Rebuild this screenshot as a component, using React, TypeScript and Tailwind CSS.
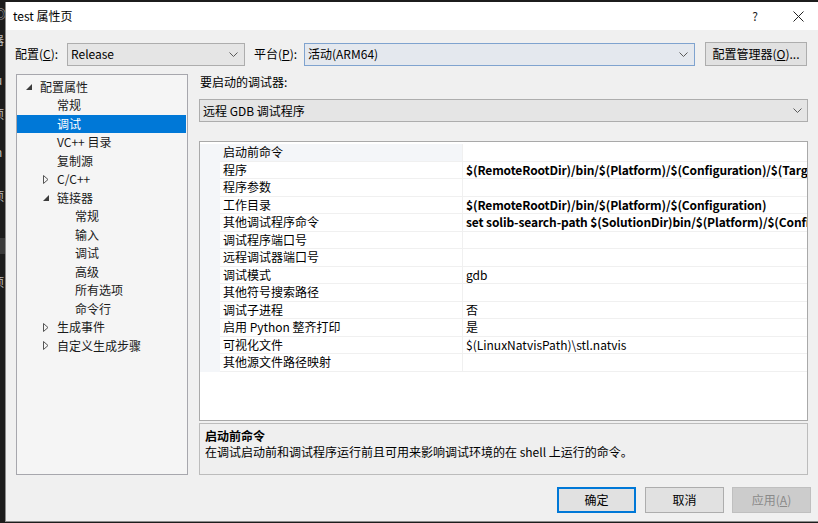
import React from "react";

type TreeItem = { label: string; level: 1 | 2 | 3; arrow?: "open" | "closed"; selected?: boolean };

const tree: TreeItem[] = [
  { label: "配置属性", level: 1, arrow: "open" },
  { label: "常规", level: 2 },
  { label: "调试", level: 2, selected: true },
  { label: "VC++ 目录", level: 2 },
  { label: "复制源", level: 2 },
  { label: "C/C++", level: 2, arrow: "closed" },
  { label: "链接器", level: 2, arrow: "open" },
  { label: "常规", level: 3 },
  { label: "输入", level: 3 },
  { label: "调试", level: 3 },
  { label: "高级", level: 3 },
  { label: "所有选项", level: 3 },
  { label: "命令行", level: 3 },
  { label: "生成事件", level: 2, arrow: "closed" },
  { label: "自定义生成步骤", level: 2, arrow: "closed" },
];

type Prop = { name: string; value: string; bold?: boolean; selected?: boolean };

const props: Prop[] = [
  { name: "启动前命令", value: "", selected: true },
  { name: "程序", value: "$(RemoteRootDir)/bin/$(Platform)/$(Configuration)/$(TargetName)$(TargetExt)", bold: true },
  { name: "程序参数", value: "" },
  { name: "工作目录", value: "$(RemoteRootDir)/bin/$(Platform)/$(Configuration)", bold: true },
  { name: "其他调试程序命令", value: "set solib-search-path $(SolutionDir)bin/$(Platform)/$(Configuration)", bold: true },
  { name: "调试程序端口号", value: "" },
  { name: "远程调试器端口号", value: "" },
  { name: "调试模式", value: "gdb" },
  { name: "其他符号搜索路径", value: "" },
  { name: "调试子进程", value: "否" },
  { name: "启用 Python 整齐打印", value: "是" },
  { name: "可视化文件", value: "$(LinuxNatvisPath)\\stl.natvis" },
  { name: "其他源文件路径映射", value: "" },
];

const Chevron = () => (
  <svg width="9" height="5" viewBox="0 0 9 5" className="shrink-0">
    <path d="M0.5 0.5 L4.5 4.5 L8.5 0.5" fill="none" stroke="#5a5a5a" strokeWidth="1" />
  </svg>
);

const ArrowOpen = () => (
  <svg width="6" height="6" viewBox="0 0 6 6">
    <path d="M6 0 L6 6 L0 6 Z" fill="#3c3c3c" />
  </svg>
);

const ArrowClosed = () => (
  <svg width="6" height="9" viewBox="0 0 6 9">
    <path d="M0.5 0.5 L5 4.5 L0.5 8.5 Z" fill="none" stroke="#555" strokeWidth="1" />
  </svg>
);

const levelPad: Record<number, string> = { 1: "pl-[9px]", 2: "pl-[26px]", 3: "pl-[44px]" };

export default function App() {
  return (
    <div className="w-[818px] h-[523px] bg-[#1c1c1c] overflow-hidden flex font-['Noto_Sans_CJK_SC','Noto_Sans',sans-serif] text-[12px] text-black">
      {/* background window strip */}
      <div className="w-[5px] h-full overflow-hidden flex flex-col text-[#bdbdbd] text-[12px] leading-[16px] shrink-0">
        <span className="mt-[6px] -ml-[6px]">◎</span>
        <span className="mt-[10px] -ml-[8px]">器</span>
        <span className="mt-[24px] -ml-[5px]">u</span>
        <span className="mt-[18px] -ml-[8px]">项</span>
        <span className="mt-[2px] -ml-[7px]">F</span>
        <span className="mt-[4px] -ml-[5px]">n</span>
        <span className="mt-[28px] -ml-[8px]">项</span>
        <div className="mt-[34px] h-[16px] bg-[#3a3a3a]" />
        <span className="mt-[20px] -ml-[8px]">项</span>
      </div>

      {/* dialog */}
      <div className="flex-1 mt-[2px] h-[520px] bg-[#f0f0f0] border-l border-b border-[#8c8c8c] flex flex-col">
        {/* title bar */}
        <div className="h-[28px] bg-white flex items-center pl-[7px] shrink-0">
          <span className="text-[12px]">test 属性页</span>
          <span className="ml-auto text-[12px] text-[#222] mr-[35px]">?</span>
          <svg width="11" height="11" viewBox="0 0 11 11" className="mr-[14px]">
            <path d="M0.5 0.5 L10.5 10.5 M10.5 0.5 L0.5 10.5" stroke="#222" strokeWidth="1" />
          </svg>
        </div>

        {/* config row */}
        <div className="mt-[12px] h-[24px] flex items-center pl-[9px] shrink-0">
          <span className="w-[52px]">
            配置(<span className="underline">C</span>):
          </span>
          <div className="w-[178px] h-[23px] bg-[#e5e5e5] border border-[#adadad] flex items-center pl-[3px] pr-[6px]">
            <span className="flex-1">Release</span>
            <Chevron />
          </div>
          <span className="w-[50px] ml-[9px]">
            平台(<span className="underline">P</span>):
          </span>
          <div className="w-[391px] h-[23px] bg-[#e4e8ee] border border-[#7fa3cf] flex items-center pl-[3px] pr-[6px]">
            <span className="flex-1">活动(ARM64)</span>
            <Chevron />
          </div>
          <div className="ml-[10px] w-[102px] h-[24px] bg-[#e1e1e1] border border-[#adadad] flex items-center justify-center">
            配置管理器(<span className="underline">O</span>)...
          </div>
        </div>

        {/* main */}
        <div className="mt-[8px] flex pl-[10px] shrink-0">
          {/* tree */}
          <div className="w-[172px] h-[401px] bg-[#f5f5f5] border border-[#a7a7ad] pt-[2.5px] overflow-hidden">
            {tree.map((t, i) => (
              <div
                key={i}
                className={`h-[18.5px] flex items-center mr-[1px] ${levelPad[t.level]} ${
                  t.selected ? "bg-[#0078d7] text-white" : "text-[#1a1a1a]"
                }`}
              >
                <span className="w-[14px] flex items-center shrink-0">
                  {t.arrow === "open" ? <ArrowOpen /> : t.arrow === "closed" ? <ArrowClosed /> : null}
                </span>
                <span className="whitespace-nowrap">{t.label}</span>
              </div>
            ))}
          </div>

          {/* right column */}
          <div className="ml-[11px] w-[609px] flex flex-col">
            <div className="h-[16px] leading-[16px] pl-[1px]">要启动的调试器:</div>
            <div className="mt-[9px] h-[23px] bg-[#e5e5e5] border border-[#adadad] flex items-center pl-[3px] pr-[5px]">
              <span className="flex-1">远程 GDB 调试程序</span>
              <Chevron />
            </div>

            {/* property grid */}
            <div className="mt-[19px] h-[280px] bg-white border border-[#a9a9a9] pt-[2px] overflow-hidden">
              {props.map((p, i) => (
                <div key={i} className="h-[17.5px] flex">
                  <div className="w-[20px] bg-[#f4f6f9] shrink-0" />
                  <div
                    className={`w-[242px] shrink-0 pl-[3px] flex items-center border-b border-[#f0f0f0] whitespace-nowrap ${
                      p.selected ? "bg-[#f4f6f9]" : ""
                    }`}
                  >
                    {p.name}
                  </div>
                  <div
                    className={`flex-1 min-w-0 pl-[3px] flex items-center border-l border-b border-[#f0f0f0] whitespace-nowrap overflow-hidden ${
                      p.bold ? "font-bold tracking-[-0.12px]" : ""
                    }`}
                  >
                    {p.value}
                  </div>
                </div>
              ))}
            </div>

            {/* description */}
            <div className="mt-[2px] h-[52px] bg-[#efefef] border border-[#bcbcbc] pl-[5px] pt-[4px]">
              <div className="h-[16px] leading-[16px] font-bold">启动前命令</div>
              <div className="h-[16px] leading-[16px]">在调试启动前和调试程序运行前且可用来影响调试环境的在 shell 上运行的命令。</div>
            </div>
          </div>
        </div>

        {/* buttons */}
        <div className="mt-[12px] flex pl-[551px] shrink-0">
          <div className="w-[79px] h-[26px] bg-[#e1e1e1] border-2 border-[#0078d7] flex items-center justify-center">确定</div>
          <div className="ml-[9px] w-[79px] h-[26px] bg-[#e1e1e1] border border-[#adadad] flex items-center justify-center">取消</div>
          <div className="ml-[8px] w-[79px] h-[26px] bg-[#cccccc] border border-[#bfbfbf] flex items-center justify-center text-[#8a8a8a]">
            应用(<span className="underline">A</span>)
          </div>
        </div>
      </div>
    </div>
  );
}
